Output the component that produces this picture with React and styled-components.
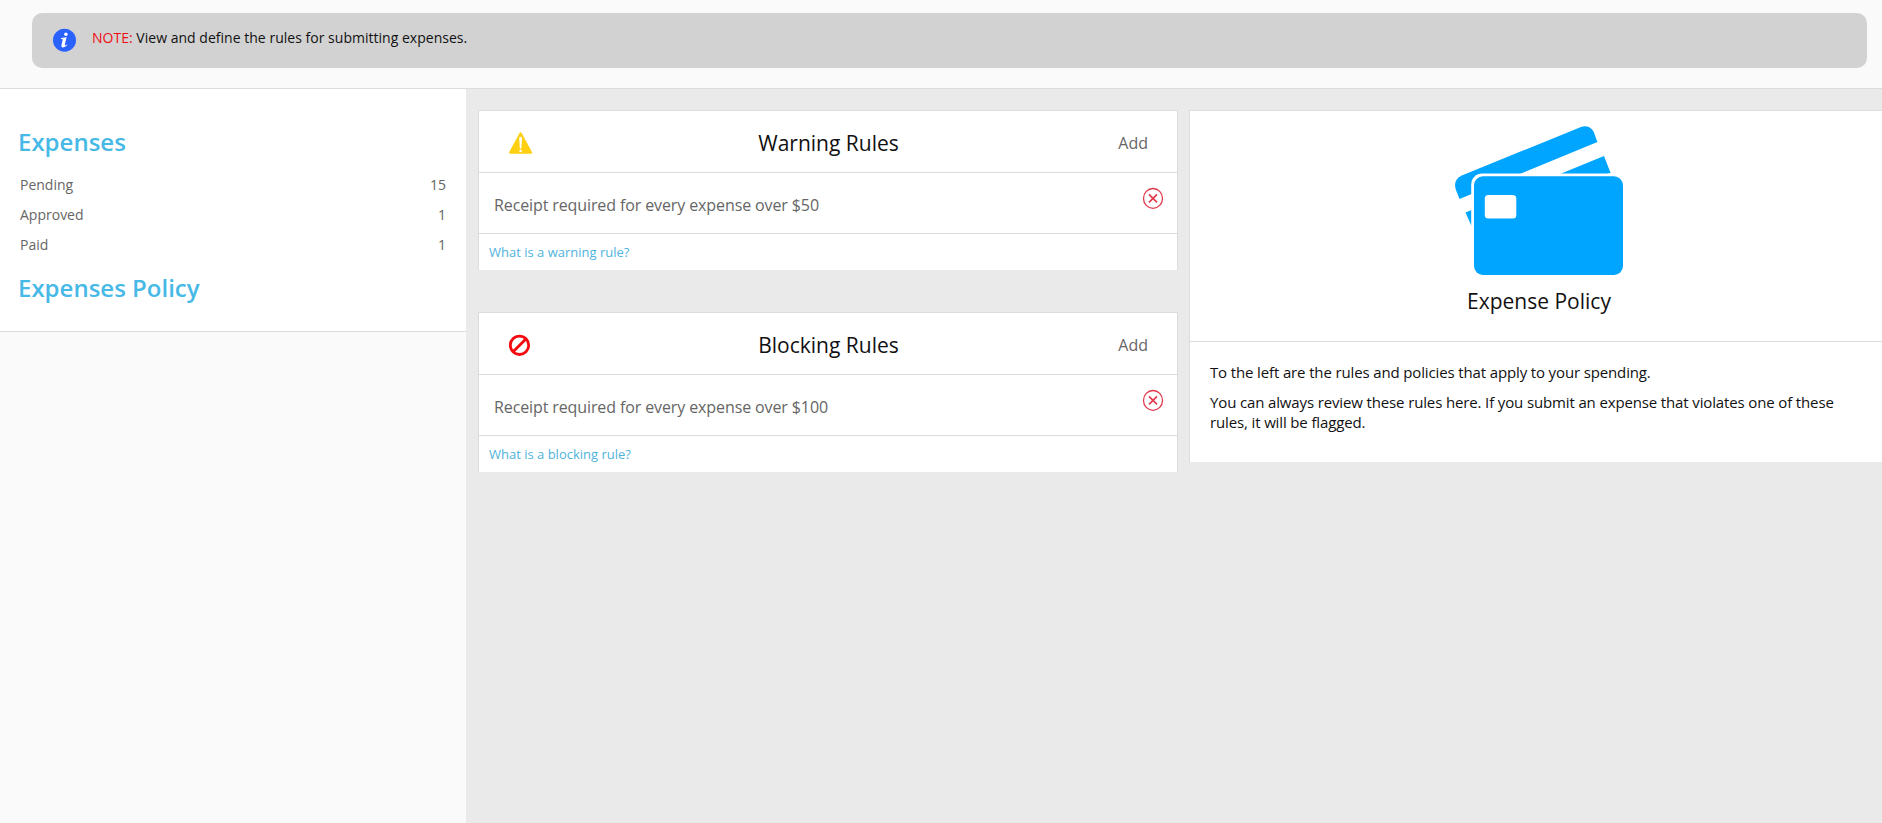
import React from "react";
import styled, { createGlobalStyle } from "styled-components";

const GlobalStyle = createGlobalStyle`
  *, *::before, *::after { box-sizing: border-box; }
  body {
    margin: 0;
    overflow: hidden;
    background: #fafafa;
    color: #111;
    font-family: "Open Sans", "Liberation Sans", sans-serif;
    font-size: 14px;
  }
  h2, h3, p, ul { margin: 0; padding: 0; font-weight: 400; }
  svg { display: block; }
`;

const Page = styled.div`
  display: flex;
  flex-direction: column;
  height: 823px;
`;

const TopBar = styled.header`
  flex: none;
  height: 89px;
  padding: 13px 15px 0 32px;
  border-bottom: 1px solid #dcdcdc;
`;

const Note = styled.div`
  display: flex;
  align-items: flex-start;
  gap: 16px;
  height: 55px;
  padding: 15px 20px 0 21px;
  border-radius: 10px;
  background: #d2d2d2;
  line-height: 20px;
  letter-spacing: 0.02px;
`;

const NoteLabel = styled.span`
  color: #f00d12;
`;

const Columns = styled.div`
  flex: 1;
  display: grid;
  grid-template-columns: 466px 1fr;
  min-height: 0;
`;

const Sidebar = styled.nav`
  align-self: start;
  padding: 37px 20px 27px 18px;
  background: #fff;
  border-bottom: 1px solid #dcdcdc;
`;

const SideTitle = styled.h2`
  color: #47b9e6;
  font-size: 24px;
  font-weight: 600;
  line-height: 32px;
`;

const StatusList = styled.ul`
  margin: 12px 0;
  padding-left: 2px;
  list-style: none;
`;

const StatusRow = styled.li`
  display: flex;
  justify-content: space-between;
  line-height: 30px;
  color: #666;
`;

const Content = styled.main`
  display: grid;
  grid-template-columns: 700px 1fr;
  gap: 11px;
  align-items: start;
  padding: 21px 0 0 12px;
  background: #eaeaea;
`;

const RuleColumn = styled.div`
  display: flex;
  flex-direction: column;
  gap: 42px;
`;

const Card = styled.section`
  background: #fff;
  border: 1px solid #dcdcdc;
  border-bottom: 0;
`;

const CardHeader = styled.header`
  display: grid;
  grid-template-columns: 1fr auto 1fr;
  align-items: center;
  height: 62px;
  padding: 2px 29px 0 30px;
  border-bottom: 1px solid #dcdcdc;
`;

const CardTitle = styled.h3`
  font-size: 21px;
  line-height: 28px;
  color: #111;
`;

const AddButton = styled.button`
  justify-self: end;
  padding: 0;
  border: 0;
  background: none;
  color: #666;
  font: 16px/22px "Open Sans", sans-serif;
`;

const RuleRow = styled.div`
  display: flex;
  justify-content: space-between;
  align-items: flex-start;
  height: 61px;
  padding: 14px 13px 0 15px;
  border-bottom: 1px solid #dcdcdc;
  color: #666;
  font-size: 16px;
`;

const RuleText = styled.p`
  padding-top: 7px;
  line-height: 22px;
  letter-spacing: -0.11px;
`;

const HelpLink = styled.a`
  display: block;
  height: 36px;
  padding-left: 10px;
  line-height: 36px;
  font-size: 13px;
  color: #4fb3dc;
`;

const PolicyHead = styled.div`
  display: flex;
  flex-direction: column;
  align-items: center;
  height: 231px;
  padding: 15px 0 0 6px;
  border-bottom: 1px solid #dcdcdc;
`;

const PolicyTitle = styled(CardTitle)`
  margin-top: 11px;
`;

const PolicyBody = styled.div`
  display: flex;
  flex-direction: column;
  gap: 10px;
  padding: 20px 40px 30px 20px;
  font-size: 15px;
  line-height: 20px;
  letter-spacing: -0.137px;
`;

const PolicyCard = styled(Card)`
  border-right: 0;
`;

const InfoIcon = () => (
  <svg width="23" height="24" viewBox="0 -0.7 23 24">
    <circle cx="11.5" cy="11.5" r="11.5" fill="#2962ff" />
    <circle cx="12.9" cy="5.5" r="1.7" fill="#fff" />
    <path d="M8.2 9.3 L13.6 8.6 L11.8 16 Q11.5 17.5 14 15.8 L14.4 16.4 Q11.8 19 9.6 18.8 Q7.8 18.4 8.5 16 L9.8 10.6 L8 10.2 Z" fill="#fff" />
  </svg>
);

const WarningIcon = () => (
  <svg width="24" height="22" viewBox="0.4 -0.4 24 22">
    <path d="M12 1.2 L22.3 20.2 H1.7 Z" fill="#ffd012" stroke="#ffd012" strokeWidth="2.4" strokeLinejoin="round" />
    <path d="M10.6 5.2 Q12 3.6 13.4 5.2 L12.8 16 H11.2 Z" fill="#fff" />
    <circle cx="12" cy="18.6" r="1.3" fill="#fff" />
  </svg>
);

const BlockIcon = () => (
  <svg width="22" height="22" viewBox="0.5 -0.3 22 22" fill="none" stroke="#f30b10" strokeWidth="2.8">
    <circle cx="11" cy="11" r="9.2" />
    <path d="M4.6 17.4 L17.4 4.6" />
  </svg>
);

const RemoveIcon = () => (
  <svg width="22" height="22" viewBox="0 -0.4 22 22" fill="none" stroke="#e0394d" strokeWidth="1.3">
    <ellipse cx="11" cy="11" rx="9.5" ry="9.9" />
    <path d="M7 7 L15 15 M15 7 L7 15" strokeWidth="1.6" />
  </svg>
);

const CardsIcon = () => (
  <svg width="168" height="150" viewBox="0 0 168 150">
    <g fill="#00a5ff">
      <path d="M4.5 73 L0.8 63.5 Q-2.2 54 6.8 49.5 L126 .9 Q134 -1.5 138.6 5.5 L142.4 16 Z" />
      <path d="M10.5 86.5 L149 30 L155.6 47 L100 62 L16.5 100 Z" />
    </g>
    <rect x="16.2" y="47.6" width="154" height="104" rx="11" fill="#fff" />
    <rect x="19" y="50.3" width="149" height="98.7" rx="9" fill="#00a5ff" />
    <rect x="29.8" y="69" width="31.5" height="23.5" rx="3.5" fill="#fff" />
  </svg>
);

const statuses = [
  { label: "Pending", count: 15 },
  { label: "Approved", count: 1 },
  { label: "Paid", count: 1 },
];

const ruleGroups = [
  {
    title: "Warning Rules",
    Icon: WarningIcon,
    rule: "Receipt required for every expense over $50",
    help: "What is a warning rule?",
  },
  {
    title: "Blocking Rules",
    Icon: BlockIcon,
    rule: "Receipt required for every expense over $100",
    help: "What is a blocking rule?",
  },
];

export default function App() {
  return (
    <Page>
      <GlobalStyle />
      <TopBar>
        <Note>
          <InfoIcon />
          <p>
            <NoteLabel>NOTE:</NoteLabel> View and define the rules for submitting expenses.
          </p>
        </Note>
      </TopBar>
      <Columns>
        <Sidebar>
          <SideTitle>Expenses</SideTitle>
          <StatusList>
            {statuses.map(({ label, count }) => (
              <StatusRow key={label}>
                <span>{label}</span>
                <span>{count}</span>
              </StatusRow>
            ))}
          </StatusList>
          <SideTitle>Expenses Policy</SideTitle>
        </Sidebar>
        <Content>
          <RuleColumn>
            {ruleGroups.map(({ title, Icon, rule, help }) => (
              <Card key={title}>
                <CardHeader>
                  <Icon />
                  <CardTitle>{title}</CardTitle>
                  <AddButton>Add</AddButton>
                </CardHeader>
                <RuleRow>
                  <RuleText>{rule}</RuleText>
                  <RemoveIcon />
                </RuleRow>
                <HelpLink>{help}</HelpLink>
              </Card>
            ))}
          </RuleColumn>
          <PolicyCard>
            <PolicyHead>
              <CardsIcon />
              <PolicyTitle>Expense Policy</PolicyTitle>
            </PolicyHead>
            <PolicyBody>
              <p>To the left are the rules and policies that apply to your spending.</p>
              <p>
                You can always review these rules here. If you submit an expense that violates one of
                these rules, it will be flagged.
              </p>
            </PolicyBody>
          </PolicyCard>
        </Content>
      </Columns>
    </Page>
  );
}
